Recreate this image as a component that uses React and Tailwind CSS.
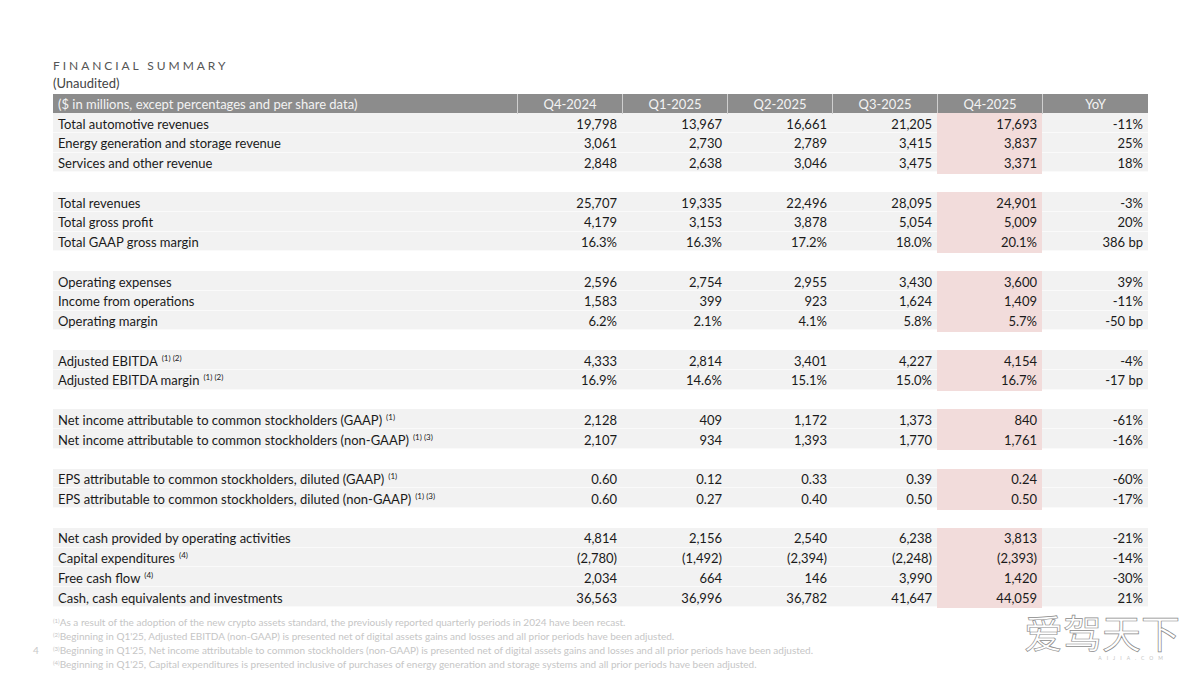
const cols = ['Q4-2024', 'Q1-2025', 'Q2-2025', 'Q3-2025', 'Q4-2025', 'YoY'];

// null = blank spacer row
const rows = [
  { label: 'Total automotive revenues', v: ['19,798', '13,967', '16,661', '21,205', '17,693', '-11%'] },
  { label: 'Energy generation and storage revenue', v: ['3,061', '2,730', '2,789', '3,415', '3,837', '25%'] },
  { label: 'Services and other revenue', v: ['2,848', '2,638', '3,046', '3,475', '3,371', '18%'] },
  null,
  { label: 'Total revenues', v: ['25,707', '19,335', '22,496', '28,095', '24,901', '-3%'] },
  { label: 'Total gross profit', v: ['4,179', '3,153', '3,878', '5,054', '5,009', '20%'] },
  { label: 'Total GAAP gross margin', v: ['16.3%', '16.3%', '17.2%', '18.0%', '20.1%', '386 bp'] },
  null,
  { label: 'Operating expenses', v: ['2,596', '2,754', '2,955', '3,430', '3,600', '39%'] },
  { label: 'Income from operations', v: ['1,583', '399', '923', '1,624', '1,409', '-11%'] },
  { label: 'Operating margin', v: ['6.2%', '2.1%', '4.1%', '5.8%', '5.7%', '-50 bp'] },
  null,
  { label: 'Adjusted EBITDA', sup: '(1) (2)', v: ['4,333', '2,814', '3,401', '4,227', '4,154', '-4%'] },
  { label: 'Adjusted EBITDA margin', sup: '(1) (2)', v: ['16.9%', '14.6%', '15.1%', '15.0%', '16.7%', '-17 bp'] },
  null,
  { label: 'Net income attributable to common stockholders (GAAP)', sup: '(1)', v: ['2,128', '409', '1,172', '1,373', '840', '-61%'] },
  { label: 'Net income attributable to common stockholders (non-GAAP)', sup: '(1) (3)', v: ['2,107', '934', '1,393', '1,770', '1,761', '-16%'] },
  null,
  { label: 'EPS attributable to common stockholders, diluted (GAAP)', sup: '(1)', v: ['0.60', '0.12', '0.33', '0.39', '0.24', '-60%'] },
  { label: 'EPS attributable to common stockholders, diluted (non-GAAP)', sup: '(1) (3)', v: ['0.60', '0.27', '0.40', '0.50', '0.50', '-17%'] },
  null,
  { label: 'Net cash provided by operating activities', v: ['4,814', '2,156', '2,540', '6,238', '3,813', '-21%'] },
  { label: 'Capital expenditures', sup: '(4)', v: ['(2,780)', '(1,492)', '(2,394)', '(2,248)', '(2,393)', '-14%'] },
  { label: 'Free cash flow', sup: '(4)', v: ['2,034', '664', '146', '3,990', '1,420', '-30%'] },
  { label: 'Cash, cash equivalents and investments', v: ['36,563', '36,996', '36,782', '41,647', '44,059', '21%'] },
];

const notes = [
  ['(1)', 'As a result of the adoption of the new crypto assets standard, the previously reported quarterly periods in 2024 have been recast.'],
  ['(2)', "Beginning in Q1'25, Adjusted EBITDA (non-GAAP) is presented net of digital assets gains and losses and all prior periods have been adjusted."],
  ['(3)', "Beginning in Q1'25, Net income attributable to common stockholders (non-GAAP) is presented net of digital assets gains and losses and all prior periods have been adjusted."],
  ['(4)', "Beginning in Q1'25, Capital expenditures is presented inclusive of purchases of energy generation and storage systems and all prior periods have been adjusted."],
];

const grid = 'grid grid-cols-[464px_105px_105px_105px_105px_105px_106px]';

export default function App() {
  return (
    <div className="relative w-[1200px] h-[675px] bg-white overflow-hidden font-['Lato','Liberation_Sans',sans-serif] text-[#1a1a1a]">
      <div className="pl-[53px] pt-[58px]">
        <div className="text-[12px] leading-[16px] tracking-[0.245em] text-[#555]">FINANCIAL SUMMARY</div>
        <div className="text-[13px] leading-[19px] text-[#444]">(Unaudited)</div>

        <div className="w-[1095px] mt-[1px]">
          <div className={`${grid} h-[19px] bg-[#8c8c8c] text-[13px] leading-[19px] text-[#f3f3f3]`}>
            <div className="pl-[5px] pt-[1px]">($ in millions, except percentages and per share data)</div>
            {cols.map(c => (
              <div key={c} className="text-center pt-[1px] border-l border-[#cfcfcf]">{c}</div>
            ))}
          </div>

          {rows.map((r, i) =>
            r === null ? (
              <div key={i} className="h-[19.75px] bg-white" />
            ) : (
              <div key={i} className={`${grid} h-[19.75px] bg-[#f2f2f2] text-[13px] leading-[19.75px] border-b border-[#fafafa]`}>
                <div className="pl-[5px] pt-[1.5px] whitespace-nowrap">
                  {r.label}
                  {r.sup && <sup className="text-[8px] ml-[4px] relative -top-[5px]">{r.sup}</sup>}
                </div>
                {r.v.map((v, j) => (
                  <div key={j} className={`text-right pr-[5px] pt-[1.5px] ${j === 4 ? 'bg-[#f2dcdb]' : ''}`}>{v}</div>
                ))}
              </div>
            )
          )}
        </div>

        <div className="flex items-start -ml-[20px] mt-[8px]">
          <div className="w-[20px] pt-[28px] text-[10px] leading-[14px] text-[#c8c8c8]">4</div>

          <div className="flex-1 text-[10px] leading-[14px] text-[#c6c6c6]">
            {notes.map(([n, t]) => (
              <div key={n} className="whitespace-nowrap">
                <sup className="text-[6px] relative -top-[3px]">{n}</sup>{t}
              </div>
            ))}
          </div>

          <div className="flex flex-col items-end mr-[20px] -mt-[4px]">
            <div className="font-['Noto_Sans_CJK_SC',sans-serif] font-normal text-[39px] leading-[40px] text-white [-webkit-text-stroke:0.7px_#8a8a8a]">爱驾天下</div>
            <div className="mt-[4px] mr-[12px] text-[5px] leading-[6px] tracking-[5px] text-[#c4c4c4]">AIJIA.COM</div>
          </div>
        </div>
      </div>
    </div>
  );
}
